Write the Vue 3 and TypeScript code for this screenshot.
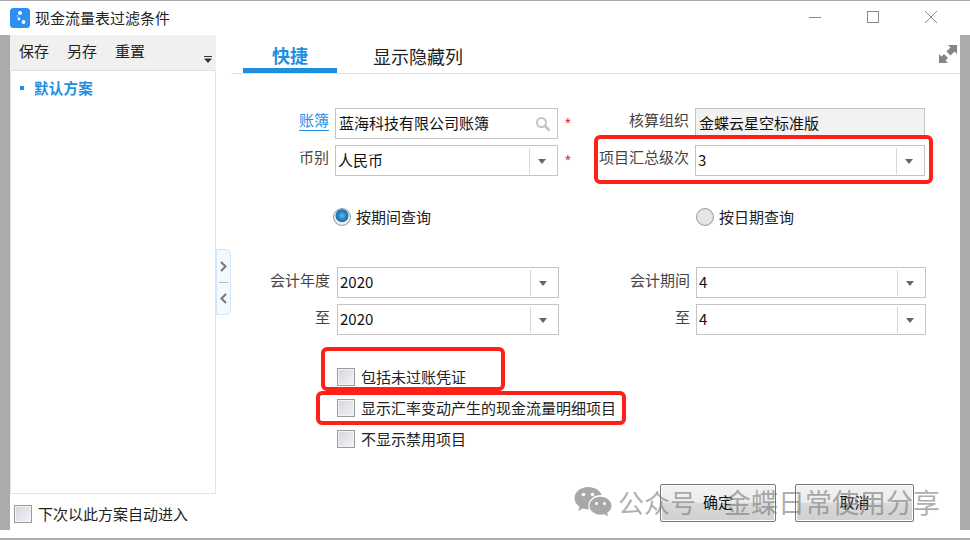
<script setup lang="ts">
interface CheckItem { label: string }
const checks: CheckItem[] = [
  { label: '包括未过账凭证' },
  { label: '显示汇率变动产生的现金流量明细项目' },
  { label: '不显示禁用项目' },
]
</script>

<template>
  <div class="window">
    <header class="titlebar">
      <svg class="logo" width="20" height="20" viewBox="0 0 20 20">
        <rect width="20" height="20" rx="3.5" fill="#2b8ff3" />
        <circle cx="10" cy="5" r="2" fill="#fff" />
        <circle cx="9" cy="11" r="1.4" fill="#fff" />
        <circle cx="13.5" cy="14" r="1.9" fill="#fff" />
        <circle cx="7.5" cy="8" r=".8" fill="#cfe6ff" />
      </svg>
      <span class="title">现金流量表过滤条件</span>
      <div class="winctl">
        <svg width="14" height="14" viewBox="0 0 14 14"><path d="M1 7.5h12" stroke="#8a8a8a" fill="none" /></svg>
        <svg width="14" height="14" viewBox="0 0 14 14"><rect x="1.5" y="1.5" width="11" height="11" stroke="#8a8a8a" fill="none" /></svg>
        <svg width="14" height="14" viewBox="0 0 14 14"><path d="M1 1l12 12M13 1L1 13" stroke="#8a8a8a" fill="none" /></svg>
      </div>
    </header>

    <div class="body">
      <aside class="side">
        <div class="toolbar">
          <span>保存</span><span>另存</span><span>重置</span>
          <svg class="more" width="8" height="7" viewBox="0 0 8 7"><path d="M0 .5h8" stroke="#333" /><path d="M0 2.5h8L4 7z" fill="#333" /></svg>
        </div>
        <div class="plans">
          <div class="plan"><i class="dot"></i>默认方案</div>
        </div>
        <label class="auto"><i class="check"></i>下次以此方案自动进入</label>
      </aside>

      <main class="main">
        <div class="tabs">
          <span class="tab active">快捷</span>
          <span class="tab">显示隐藏列</span>
          <svg class="expand" width="18" height="18" viewBox="0 0 18 18">
            <path d="M9 0h9v9l-2.500-2.500-4 4-4-4 4-4z" fill="#858585" />
            <path d="M0 9v9h9l-2.500-2.500 2.500-2.500-4-4-2.500 2.500z" fill="#858585" />
          </svg>
        </div>

        <div class="handle">
          <svg width="9" height="13" viewBox="0 0 9 13"><path d="M2 2l4.500 4.500L2 11" stroke="#777" stroke-width="2" fill="none" /></svg>
          <i class="sep"></i>
          <svg width="9" height="13" viewBox="0 0 9 13"><path d="M7 2L2.500 6.500 7 11" stroke="#777" stroke-width="2" fill="none" /></svg>
        </div>

        <div class="grid top">
          <a class="lbl link">账簿</a>
          <div class="field lookup"><span>蓝海科技有限公司账簿</span>
            <svg width="16" height="16" viewBox="0 0 16 16"><circle cx="6.500" cy="6.500" r="4.500" stroke="#c4c4c4" stroke-width="2" fill="none" /><path d="M10 10l4.500 4.500" stroke="#c4c4c4" stroke-width="2.500" /></svg>
          </div>
          <div class="mid"><b class="star">*</b><span class="lbl">核算组织</span></div>
          <div class="field readonly"><span>金蝶云星空标准版</span></div>

          <span class="lbl">币别</span>
          <div class="field select"><span>人民币</span><em class="drop"></em></div>
          <div class="mid"><b class="star">*</b><span class="lbl">项目汇总级次</span></div>
          <div class="field select"><span>3</span><em class="drop"></em></div>
        </div>

        <div class="radios">
          <label class="radio first"><i class="rd on"></i>按期间查询</label>
          <label class="radio second"><i class="rd"></i>按日期查询</label>
        </div>

        <div class="grid period">
          <span class="lbl">会计年度</span>
          <div class="field select"><span>2020</span><em class="drop"></em></div>
          <div class="mid end"><span class="lbl">会计期间</span></div>
          <div class="field select"><span>4</span><em class="drop"></em></div>

          <span class="lbl">至</span>
          <div class="field select"><span>2020</span><em class="drop"></em></div>
          <div class="mid end"><span class="lbl">至</span></div>
          <div class="field select"><span>4</span><em class="drop"></em></div>
        </div>

        <div class="checks">
          <label v-for="c in checks" :key="c.label" class="chk"><i class="check"></i>{{ c.label }}</label>
        </div>

        <div class="actions">
          <button class="btn ok">确定</button>
          <button class="btn cancel">取消</button>
        </div>
      </main>
    </div>

    <i class="mark m1"></i>
    <i class="mark m2"></i>
    <i class="mark m3"></i>

    <div class="watermark">
      <svg width="38" height="31" viewBox="0 0 38 31">
        <path d="M14 1C6.500 1 .500 6 .500 12.200c0 3.500 2 6.500 5 8.600L4.200 25l4.800-2.500c1.600.4 3.300.7 5 .7h1c-.4-1.100-.6-2.300-.6-3.500 0-6 5.600-10.800 12.400-10.800h.9C26.200 4.600 20.600 1 14 1z" fill="#a8a8a8" />
        <path d="M37.500 19.700c0-5-4.900-9-11-9s-11 4-11 9 4.900 9 11 9c1.300 0 2.600-.2 3.800-.5l3.800 2-1-3.400c2.700-1.700 4.400-4.300 4.400-7.100z" fill="#a8a8a8" />
        <circle cx="9.500" cy="8.500" r="1.800" fill="#fff" />
        <circle cx="18.500" cy="8.500" r="1.800" fill="#fff" />
        <circle cx="22.500" cy="17.500" r="1.500" fill="#fff" />
        <circle cx="30.500" cy="17.500" r="1.500" fill="#fff" />
      </svg>
      <span class="wm1">公众号</span>
      <span class="wm2">金蝶日常使用分享</span>
    </div>
  </div>
</template>

<style>
html, body { margin: 0; background: #fff; }
</style>

<style scoped>
.window {
  position: relative;
  width: 970px;
  height: 540px;
  overflow: hidden;
  box-sizing: border-box;
  background: #fff;
  border-top: 1px solid #ababab;
  border-bottom: 2px solid #ababab;
  font: 15px/20px "Noto Sans CJK SC", "Noto Sans", sans-serif;
  color: #222;
}
i, em { display: block; font-style: normal; }
.titlebar {
  height: 34px;
  display: flex;
  align-items: center;
  padding-left: 10px;
  box-sizing: border-box;
}
.logo { margin-right: 5px; }
.title { line-height: 20px; color: #222; }
.winctl {
  margin-left: auto;
  margin-right: 32px;
  display: flex;
  gap: 44px;
  margin-top: -2px;
}
.body {
  height: 495px;
  display: flex;
  background: #fff;
  margin: 0 10px;
  box-shadow: -10px 0 0 #ababab, 10px 0 0 #ababab;
}
.side {
  width: 206px;
  flex: none;
  display: flex;
  flex-direction: column;
}
.toolbar {
  position: relative;
  height: 35px;
  box-sizing: border-box;
  background: #f0f0f0;
  display: flex;
  gap: 18px;
  padding: 6px 0 0 9px;
  color: #222;
}
.more { position: absolute; right: 4px; bottom: 7px; }
.plans {
  height: 424px;
  box-sizing: border-box;
  border: 1px solid #e2e2e2;
  padding-top: 7px;
}
.plan {
  display: flex;
  align-items: center;
  color: #1e8fdf;
  font-weight: 700;
  font-size: 14.500px;
  letter-spacing: .25px;
}
.dot { width: 4px; height: 4px; background: #1e8fdf; margin: 0 10px 0 9px; }
.auto {
  display: flex;
  align-items: center;
  gap: 6px;
  height: 36px;
  padding: 3px 0 0 4px;
  box-sizing: border-box;
}
.check {
  width: 18px;
  height: 18px;
  box-sizing: border-box;
  border: 1px solid #9a9a9a;
  box-shadow: inset 0 0 0 1px #f4f4f4;
  background: linear-gradient(135deg, #d2d6de, #f2f3f6);
  flex: none;
}
.main {
  position: relative;
  flex: 1;
  display: flex;
  flex-direction: column;
}
.tabs {
  position: relative;
  display: flex;
  align-items: flex-end;
  height: 39px;
  margin-left: 15px;
  border-bottom: 1px solid #e2e2e2;
  box-sizing: border-box;
}
.tab {
  font-size: 18px;
  line-height: 24px;
  padding-bottom: 5px;
  margin-left: 36px;
  color: #222;
}
.tab.active {
  width: 94px;
  box-sizing: border-box;
  text-align: center;
  margin-left: 12px;
  color: #1e8fdf;
  font-weight: 700;
  padding-bottom: 1px;
  border-bottom: 5px solid #1e8fdf;
}
.expand { position: absolute; right: 3px; top: 10px; }
.handle {
  position: absolute;
  left: 0;
  top: 214px;
  width: 15px;
  height: 66px;
  box-sizing: border-box;
  border: 1px solid #d2e7fa;
  border-radius: 0 5px 5px 0;
  background: #f2f9ff;
  display: flex;
  flex-direction: column;
  align-items: center;
  justify-content: center;
  gap: 9px;
}
.sep { width: 9px; height: 1px; background: #bbb; }
.grid {
  display: grid;
  grid-template-columns: 119px 223px 137px 230px;
  grid-auto-rows: 31px;
  row-gap: 6px;
}
.top { margin-top: 34px; }
.top .lbl { line-height: 24px; }
.period {
  margin-top: 40px;
  grid-template-columns: 121px 222px 137px 230px;
}
.lbl {
  color: #444;
  text-align: right;
  line-height: 26px;
  padding-right: 6px;
  white-space: nowrap;
}
.period > .lbl { padding-right: 7px; }
.top .link {
  justify-self: end;
  margin-right: 6px;
  padding: 0;
  height: 20px;
  line-height: 20px;
  margin-top: 2px;
  color: #1e90ea;
  border-bottom: 1px solid #1e90ea;
}
.mid { display: flex; justify-content: space-between; }
.mid.end { justify-content: flex-end; }
.star {
  color: #e8141c;
  font-weight: 400;
  margin-left: 7px;
  line-height: 30px;
  font-family: "Liberation Sans", sans-serif;
}
.field {
  display: flex;
  align-items: center;
  box-sizing: border-box;
  border: 1px solid #c4c4c4;
  padding-left: 3px;
  color: #111;
  background: #fff;
}
.field.select { padding-left: 2px; }
.field span { flex: 1; margin-top: -1px; white-space: nowrap; }
.lookup svg { margin-right: 6px; flex: none; }
.readonly { background: #f2f2f2; }
.select .drop {
  position: relative;
  flex: none;
  width: 27px;
  height: 26px;
  border-left: 1px solid #d8d8d8;
}
.drop::after {
  content: "";
  position: absolute;
  left: 8px;
  top: 11px;
  border: 4px solid transparent;
  border-top: 5px solid #666;
  border-left-width: 4.500px;
  border-right-width: 4.500px;
}
.radios {
  position: relative;
  margin-top: 31px;
  height: 20px;
  display: flex;
}
.radio { display: flex; align-items: center; gap: 5px; }
.first { margin-left: 117px; }
.second { margin-left: 265px; }
.rd {
  width: 18px;
  height: 18px;
  box-sizing: border-box;
  border-radius: 50%;
  border: 1px solid #9c9c9c;
  background: radial-gradient(circle, #e6e6e6 55%, #cfd2d6 100%);
}
.rd.on {
  background:
    radial-gradient(circle at 50% 42%, #6ab8e8 0, #2079bb 38%, #2079bb 50%, transparent 56%),
    radial-gradient(circle, #f4f4f4 55%, #c4c8cd 100%);
}
.checks {
  margin: 33px 0 0 121px;
  display: flex;
  flex-direction: column;
  gap: 13px;
}
.chk { display: flex; align-items: center; gap: 6px; height: 18px; }
.actions {
  margin-top: auto;
  display: flex;
  justify-content: flex-end;
  gap: 19px;
  padding: 0 46px 8px 0;
}
.btn {
  height: 38px;
  box-sizing: border-box;
  padding: 0 0 3px;
  border: 1px solid #777;
  border-radius: 2px;
  box-shadow: inset 0 0 0 1px #fff;
  background: linear-gradient(#f3f3f3 0, #ececec 48%, #d9d9d9 50%, #d0d0d0 100%);
  font: 15px/20px "Noto Sans CJK SC", sans-serif;
  color: #111;
}
.ok { width: 116px; }
.cancel { width: 119px; }
.mark {
  position: absolute;
  box-sizing: border-box;
  border: 4px solid #ff2018;
  border-radius: 6px;
  pointer-events: none;
}
.m1 { left: 594px; top: 134px; width: 339px; height: 49px; }
.m2 { left: 321px; top: 346px; width: 184px; height: 44px; }
.m3 { left: 316px; top: 390px; width: 310px; height: 34px; }
.watermark {
  position: absolute;
  left: 574px;
  top: 485px;
  height: 31px;
  display: flex;
  align-items: center;
  color: rgba(120, 120, 120, .62);
  line-height: 30px;
  white-space: nowrap;
}
.wm1 { margin-left: 6px; font-size: 26px; }
.wm2 { margin-left: 28px; font-size: 27px; }
</style>
